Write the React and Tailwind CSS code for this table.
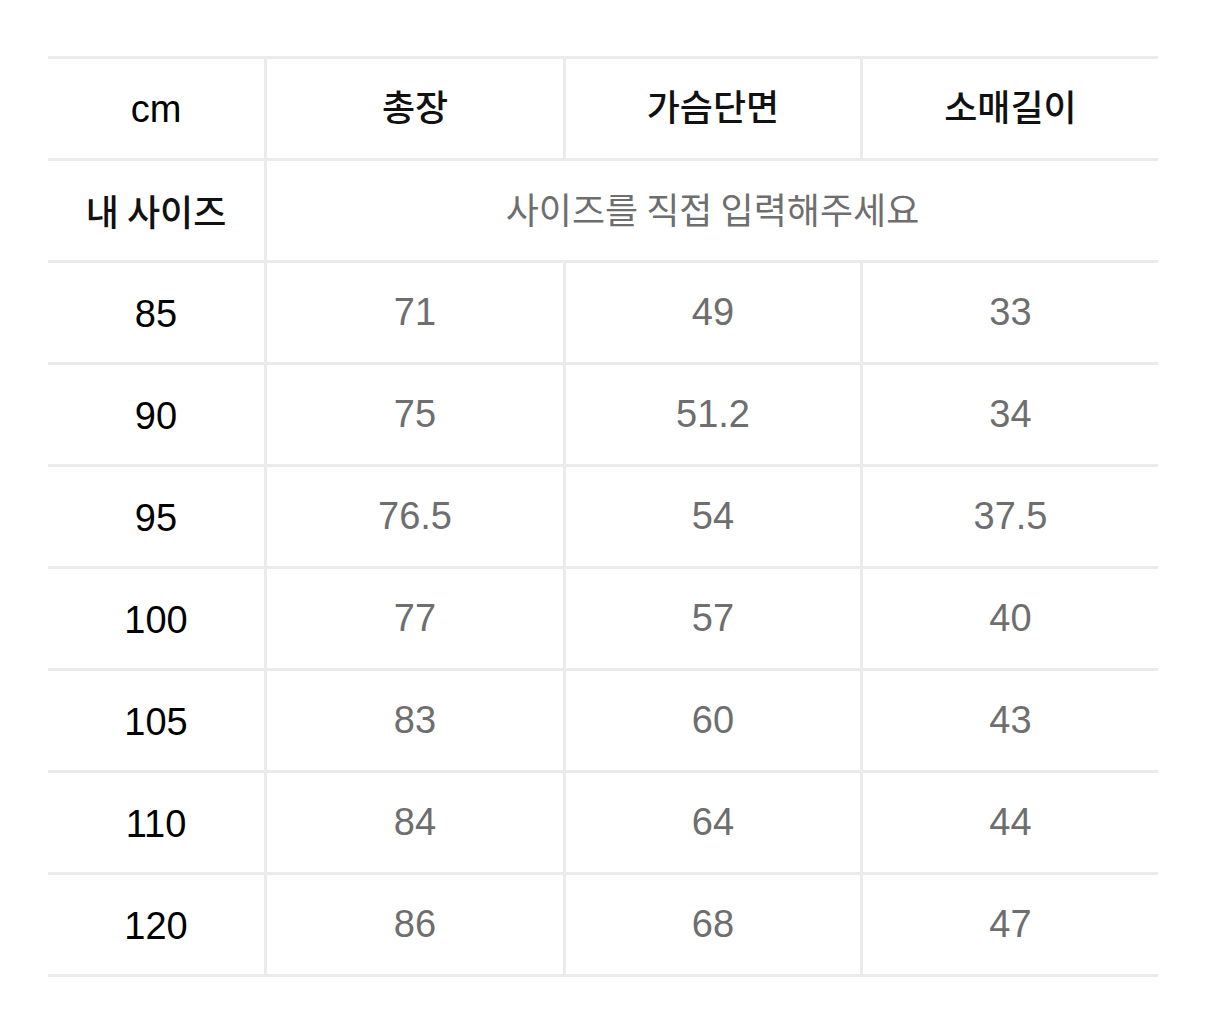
import React from "react";

const headers = ["총장", "가슴단면", "소매길이"];

const rows = [
  ["85", "71", "49", "33"],
  ["90", "75", "51.2", "34"],
  ["95", "76.5", "54", "37.5"],
  ["100", "77", "57", "40"],
  ["105", "83", "60", "43"],
  ["110", "84", "64", "44"],
  ["120", "86", "68", "47"],
];

const rowClass =
  "grid grid-cols-[216px_299px_297px_298px] h-[102px] border-b-[3px] border-[#ebebeb]";
const cell = "flex items-center justify-center";
const divided = "flex items-center justify-center border-l-[3px] border-[#ebebeb]";

const num = { fontFamily: '"Liberation Sans", Arial, sans-serif' };
const kr = { fontFamily: '"Noto Sans CJK KR", "Noto Sans", sans-serif' };

export default function App() {
  return (
    <div className="min-h-screen bg-white pt-[56px] pl-[48px]">
      <div className="w-[1110px] border-t-[3px] border-[#ebebeb]">
        <div className={rowClass}>
          <div className={cell}>
            <span className="text-[38px] text-black pt-[2px]" style={num}>
              cm
            </span>
          </div>
          {headers.map((h) => (
            <div key={h} className={divided}>
              <span className="text-[36px] font-medium text-[#111] pb-[8px]" style={kr}>
                {h}
              </span>
            </div>
          ))}
        </div>

        <div className={rowClass}>
          <div className={cell}>
            <span className="text-[36px] font-medium text-[#111] pb-[2px]" style={kr}>
              내 사이즈
            </span>
          </div>
          <div className={divided + " col-span-3"}>
            <span className="text-[36px] text-[#6e6e6e] pb-[6px]" style={kr}>
              사이즈를 직접 입력해주세요
            </span>
          </div>
        </div>

        {rows.map((r) => (
          <div key={r[0]} className={rowClass}>
            <div className={cell}>
              <span className="text-[38px] text-black pt-[4px]" style={num}>
                {r[0]}
              </span>
            </div>
            {r.slice(1).map((v, i) => (
              <div key={i} className={divided}>
                <span className="text-[38px] text-[#6e6e6e]" style={num}>
                  {v}
                </span>
              </div>
            ))}
          </div>
        ))}
      </div>
    </div>
  );
}
